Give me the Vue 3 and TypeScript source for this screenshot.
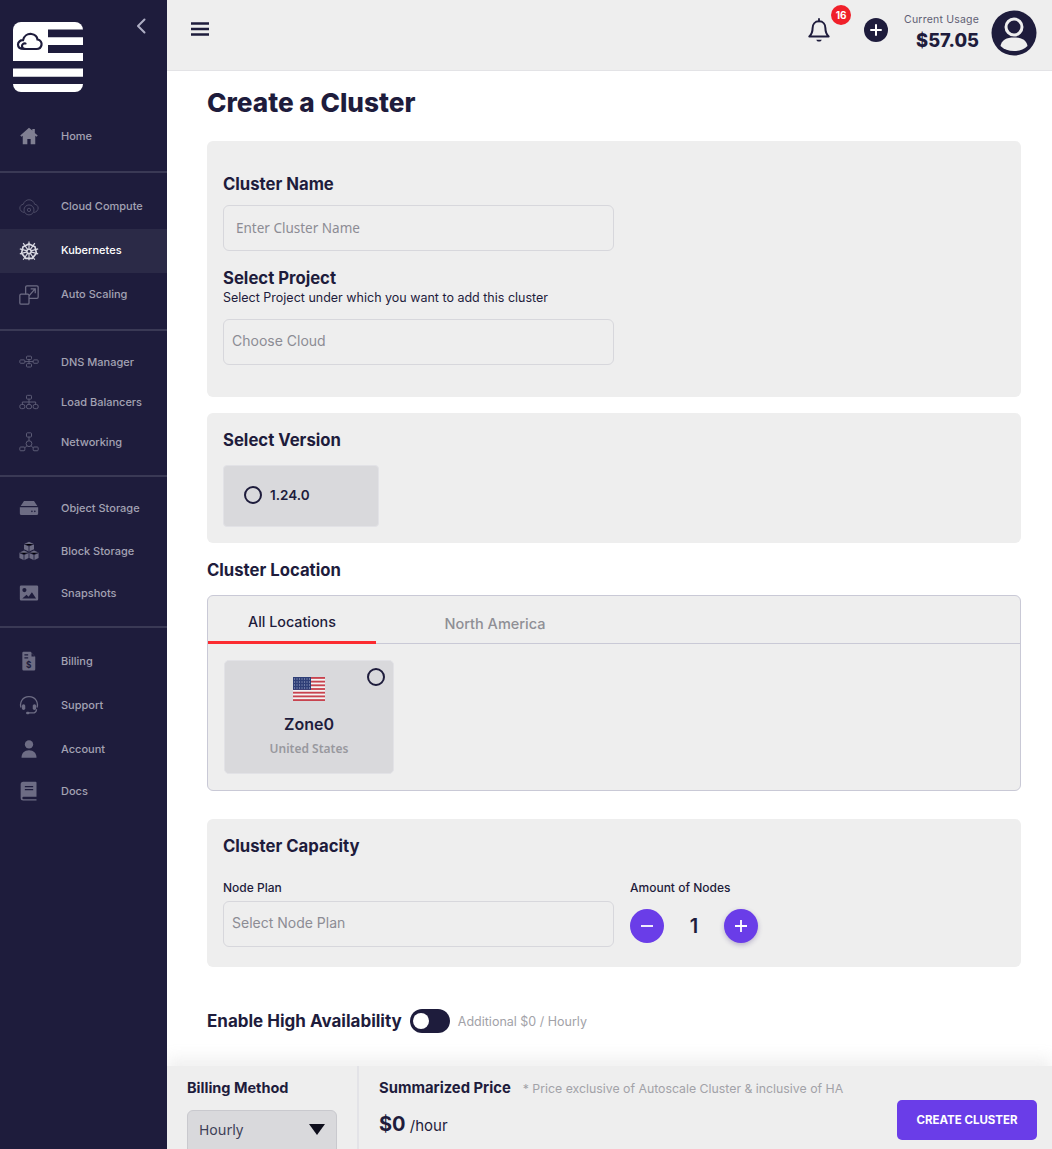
<script setup lang="ts">
interface NavItem { label: string; icon: string; active?: boolean; short?: boolean }
interface NavGroup { size: string; items: NavItem[] }

const solid = 'fill="#6d6c84"'
const line = 'fill="none" stroke="#5d5c76" stroke-width="1.2"'

const icons: Record<string, string> = {
  home: `<path fill="#807f92" d="M12 2 1.5 11.5 3 13l1.5-1.2V22h5.5v-6.5h4V22h5.5v-10.200L21 13l1.500-1.500-3.500-3.200V3.500h-3v2z"/>`,
  cloud: `<path fill="none" stroke="#4c4b66" stroke-width="1.200" d="M6 18.500C3 18 1 15.800 1 13.200c0-2.300 1.800-4.200 4.200-4.500C6 5.600 8.800 3.300 12 3.300c3.300 0 6 2.400 6.800 5.400 2.400.3 4.200 2.200 4.200 4.500 0 2.600-1.900 4.800-5 5.300"/><circle fill="none" stroke="#4c4b66" stroke-width="1.200" cx="12" cy="15.500" r="6"/><circle fill="none" stroke="#4c4b66" stroke-width="1.200" cx="12" cy="15.500" r="2"/>`,
  kube: `<g fill="none" stroke="#d9d9e2" stroke-width="2"><path d="m12 3.500 7.200 3.400 1.700 7.700-5 6.200H8.100l-5-6.200 1.700-7.700z"/><circle cx="12" cy="12.500" r="2.400"/></g><g stroke="#d9d9e2" stroke-width="1.400"><path d="M12 .5v22.500M1 9.500l22 6M23 9.500 1 15.500M5 2.500l14 20M19 2.500 5 22.500"/></g><circle cx="12" cy="12.500" r="1.600" fill="#2b2a47"/>`,
  scale: `<g fill="none" stroke="#6d6c84" stroke-width="1.500"><rect x="8" y="1" width="15" height="15" rx="1.500"/><path d="M12 13l7-8M14 4.500h5.500V10"/><rect x="1" y="11" width="11" height="12" rx="1.500" fill="#1e1c3c"/></g>`,
  dns: `<g ${line}><rect x="9" y="5" width="6" height="4" rx="1"/><rect x="9" y="14" width="6" height="4" rx="1"/><rect x="1" y="9.500" width="6" height="4" rx="1"/><rect x="17" y="9.500" width="6" height="4" rx="1"/><path d="M12 9v5M7 11.500h10"/></g>`,
  lb: `<g ${line}><rect x="9" y="4" width="6" height="4.500" rx="1"/><rect x="1" y="15" width="6" height="5" rx="2"/><rect x="9" y="15" width="6" height="5" rx="2"/><rect x="17" y="15" width="6" height="5" rx="2"/><path d="M12 8.500V15M4 15v-3h16v3"/></g>`,
  net: `<g ${line}><rect x="9" y="1" width="6" height="5" rx="1"/><rect x="1" y="18" width="6" height="4.500" rx="1"/><rect x="17" y="18" width="6" height="4.500" rx="1"/><circle cx="12" cy="14" r="3.500"/><path d="M12 6v4.500M9.500 16.500 7 19M14.500 16.500 17 19"/></g>`,
  object: `<path ${solid} d="M6 3.500h12l4 6H2z"/><path ${solid} fill-rule="evenodd" d="M1 11h22v7.500a2 2 0 0 1-2 2H3a2 2 0 0 1-2-2zm14.500 4a1 1 0 1 0 0 2 1 1 0 0 0 0-2zm3.500 0a1 1 0 1 0 0 2 1 1 0 0 0 0-2z"/>`,
  block: `<path ${solid} d="M12 1l6 2.500V10l-6 2.500L6 10V3.500z"/><path ${solid} d="M6 11.500l5.500 2.300v6.700L6 23 .500 20.500v-6.700z"/><path ${solid} d="M18 11.500l5.500 2.300v6.700L18 23l-5.500-2.500v-6.700z"/><path stroke="#1e1c3c" stroke-width="1" d="M6 3.500l6 2.500 6-2.500M12 6v6M.5 14l5.500 2.300 5.500-2.300M6 16.300V23M12.500 14l5.500 2.300 5.500-2.300M18 16.300V23"/>`,
  snap: `<path ${solid} fill-rule="evenodd" d="M2.500 3h19A1.500 1.500 0 0 1 23 4.500v15a1.500 1.500 0 0 1-1.500 1.500h-19A1.500 1.500 0 0 1 1 19.500v-15A1.500 1.500 0 0 1 2.500 3zM6.500 6a2.500 2.500 0 1 0 0 5 2.500 2.500 0 0 0 0-5zM4 18.500h16.500l-5-7.500-4 5.500-2.500-2.500z"/>`,
  bill: `<path ${solid} fill-rule="evenodd" d="M5.500 1H14l5.500 6v15a1.500 1.500 0 0 1-1.500 1.500H5.500A1.500 1.500 0 0 1 4 22V2.500A1.500 1.500 0 0 1 5.500 1zM15 2.500V6.500h4zM6.500 4v1.500H11V4zM6.500 7.500V9H11V7.500z"/><text x="11.800" y="20" font-size="10" font-weight="700" font-family="Inter, sans-serif" text-anchor="middle" fill="#1e1c3c">$</text>`,
  support: `<path fill="none" stroke="#6d6c84" stroke-width="1.600" d="M2.500 15c-2-5 1-13 9.500-13s11.500 8 9.500 13M21 17c0 2.500-2 4.500-5 4.500h-4"/><rect ${solid} x="3.500" y="11" width="4" height="7" rx="2"/><rect ${solid} x="16.500" y="11" width="4" height="7" rx="2"/><rect ${solid} x="8.500" y="20" width="4" height="3" rx="1.500"/>`,
  account: `<circle ${solid} cx="12" cy="6.500" r="5"/><path ${solid} d="M3 22.500c0-5.500 3.500-9 9-9s9 3.500 9 9z"/>`,
  docs: `<path ${solid} fill-rule="evenodd" d="M5 1h15a1 1 0 0 1 1 1v17H5.500a1.500 1.500 0 0 0 0 3H21v1.500H5A3 3 0 0 1 2 20.500V4a3 3 0 0 1 3-3zM7 6v1.500h10V6zM7 9.500V11h10V9.500z"/>`,
}

const groups: NavGroup[] = [
  { size: 'home', items: [{ label: 'Home', icon: 'home' }] },
  {
    size: 'wide',
    items: [
      { label: 'Cloud Compute', icon: 'cloud' },
      { label: 'Kubernetes', icon: 'kube', active: true },
      { label: 'Auto Scaling', icon: 'scale' },
    ],
  },
  {
    size: 'tight',
    items: [
      { label: 'DNS Manager', icon: 'dns' },
      { label: 'Load Balancers', icon: 'lb' },
      { label: 'Networking', icon: 'net' },
    ],
  },
  {
    size: 'mid',
    items: [
      { label: 'Object Storage', icon: 'object' },
      { label: 'Block Storage', icon: 'block' },
      { label: 'Snapshots', icon: 'snap' },
    ],
  },
  {
    size: 'last',
    items: [
      { label: 'Billing', icon: 'bill' },
      { label: 'Support', icon: 'support' },
      { label: 'Account', icon: 'account' },
      { label: 'Docs', icon: 'docs', short: true },
    ],
  },
]

const stripes: number[] = [0, 2, 4, 6, 8, 10, 12]
</script>

<template>
  <div class="page">
    <aside class="sidebar">
      <div class="brand">
        <svg class="logo" width="70" height="70" viewBox="0 0 70 70">
          <rect width="70" height="70" rx="8" fill="#fff" />
          <path d="M35 7.500h35v7.800H35zM35 23h35v8H35zM0 39h70v7.500H0zM0 54.700h70V62H0z" fill="#1e1c3c" />
          <path d="M11 27c-4 0-6-2-6-4.500S7.500 18 10 18.200C11 14 14.500 11.500 18.500 12c3.500.4 5.500 2.500 6 5.500 3 .5 4.500 3 4 5.500-.5 2.500-2.500 4-5 4H13c-2.500 0-4-1.500-4-3s1.500-3 3.500-2.500" fill="none" stroke="#1e1c3c" stroke-width="2.200" stroke-linecap="round" />
        </svg>
        <svg class="chev" width="10" height="16" viewBox="0 0 10 16">
          <path d="M8.500 1.500 2 8l6.500 6.500" fill="none" stroke="#aeaec4" stroke-width="2" stroke-linecap="round" stroke-linejoin="round" />
        </svg>
      </div>
      <nav class="nav">
        <div v-for="g in groups" :key="g.size" class="group" :class="g.size">
          <div v-for="it in g.items" :key="it.label" class="item" :class="{ active: it.active, short: it.short }">
            <svg class="nav-icon" width="20" height="20" viewBox="0 0 24 24" v-html="icons[it.icon]"></svg>
            <span>{{ it.label }}</span>
          </div>
        </div>
      </nav>
    </aside>

    <div class="column">
      <header class="topbar">
        <svg class="burger" width="18" height="14" viewBox="0 0 18 14">
          <path d="M0 1.500h18M0 7h18M0 12.500h18" stroke="#1e1c3c" stroke-width="2.300" />
        </svg>
        <div class="top-right">
          <div class="bell-wrap">
            <svg width="22" height="24" viewBox="0 0 24 26">
              <path d="M12 3.500c-4.500 0-7 3.500-7 7.500 0 5-1.500 7-3.500 9h21c-2-2-3.500-4-3.500-9 0-4-2.500-7.500-7-7.500z" fill="none" stroke="#1e1c3c" stroke-width="2.200" stroke-linejoin="round" />
              <path d="M12 1v2.500" stroke="#1e1c3c" stroke-width="2" stroke-linecap="round" />
              <path d="M9 23.500h6c-.5 1.500-1.500 2-3 2s-2.500-.5-3-2z" fill="#1e1c3c" />
            </svg>
            <span class="badge">16</span>
          </div>
          <span class="add">
            <svg width="12" height="12" viewBox="0 0 12 12"><path d="M6 1v10M1 6h10" stroke="#fff" stroke-width="2" stroke-linecap="round" /></svg>
          </span>
          <div class="usage">
            <span class="usage-label">Current Usage</span>
            <strong class="usage-value">$57.05</strong>
          </div>
          <svg class="avatar" width="46" height="46" viewBox="0 0 46 46">
            <circle cx="23" cy="23" r="22.500" fill="#1e1c3c" />
            <circle cx="23" cy="17" r="8" fill="none" stroke="#eee" stroke-width="3" />
            <path d="M9.500 36c1-6 6-8.500 13.500-8.500S35.500 30 36.500 36c-3.500 3.500-8 5-13.500 5s-10-1.500-13.500-5z" fill="#eee" />
          </svg>
        </div>
      </header>

      <main class="content">
        <h1 class="title">Create a Cluster</h1>

        <section class="panel first">
          <h2 class="label">Cluster Name</h2>
          <div class="field ph-hum">Enter Cluster Name</div>
          <h2 class="label project">Select Project</h2>
          <p class="hint">Select Project under which you want to add this cluster</p>
          <div class="field">Choose Cloud</div>
        </section>

        <section class="panel second">
          <h2 class="label">Select Version</h2>
          <div class="version"><span class="radio"></span><span>1.24.0</span></div>
        </section>

        <h2 class="label location-title">Cluster Location</h2>
        <section class="location">
          <div class="tabs">
            <div class="tab on">All Locations</div>
            <div class="tab off">North America</div>
          </div>
          <div class="zones">
            <div class="zone">
              <span class="radio zone-radio"></span>
              <svg class="flag" width="32" height="24" viewBox="0 0 32 24">
                <rect width="32" height="24" fill="#f4f4f4" />
                <rect v-for="s in stripes" :key="s" x="0" :y="(s * 24) / 13" width="32" height="1.850" fill="#c8434f" />
                <rect width="18" height="12.900" fill="#2f3f77" />
                <path d="M1 2h16M1 5h16M1 8h16M1 11h16" stroke="#aab2cf" stroke-width="1" stroke-dasharray="1 1.500" />
              </svg>
              <div class="zone-name">Zone0</div>
              <div class="zone-sub">United States</div>
            </div>
          </div>
        </section>

        <section class="panel third">
          <h2 class="label">Cluster Capacity</h2>
          <div class="capacity">
            <div class="cap-plan">
              <div class="small-label">Node Plan</div>
              <div class="field">Select Node Plan</div>
            </div>
            <div>
              <div class="small-label">Amount of Nodes</div>
              <div class="stepper">
                <span class="step"><svg width="12" height="12" viewBox="0 0 12 12"><path d="M0 6h12" stroke="#fff" stroke-width="1.800" /></svg></span>
                <span class="count">1</span>
                <span class="step raised"><svg width="14" height="14" viewBox="0 0 14 14"><path d="M7 1v12M1 7h12" stroke="#fff" stroke-width="1.800" /></svg></span>
              </div>
            </div>
          </div>
        </section>

        <div class="ha">
          <span class="ha-label">Enable High Availability</span>
          <span class="toggle"><span class="knob"></span></span>
          <span class="ha-note">Additional $0 / Hourly</span>
        </div>
      </main>

      <footer class="footer">
        <div class="billing">
          <div class="foot-title">Billing Method</div>
          <div class="select">
            <span>Hourly</span>
            <svg width="16" height="11" viewBox="0 0 16 11"><path d="M0 0h16L8 11z" fill="#0e0e1c" /></svg>
          </div>
        </div>
        <div class="summary">
          <div class="sum-head">
            <span class="foot-title sum-title">Summarized Price</span>
            <span class="sum-note">* Price exclusive of Autoscale Cluster &amp; inclusive of HA</span>
          </div>
          <div class="sum-row">
            <div class="price"><strong>$0</strong> <span>/hour</span></div>
            <button class="create" type="button">CREATE CLUSTER</button>
          </div>
        </div>
      </footer>
    </div>
  </div>
</template>

<style>
html, body { margin: 0; padding: 0; background: #fff; }
</style>

<style scoped>
* { box-sizing: border-box; }
.page {
  display: flex;
  width: 1052px;
  height: 1149px;
  overflow: hidden;
  font-family: Inter, "Noto Sans", sans-serif;
  color: #1e1c3c;
}
.sidebar { position: relative; z-index: 1; width: 167px; flex: none; background: #1e1c3c; }
.brand { display: flex; justify-content: space-between; align-items: flex-start; height: 114px; padding: 22px 21px 0 13px; }
.chev { margin-top: -4px; }
.group { border-bottom: 2px solid #3a3955; }
.group.last { border-bottom: 0; }
.group.home { height: 59px; display: flex; align-items: flex-start; }
.group.home .item { width: 100%; }
.group.wide { height: 158px; padding-top: 12px; }
.group.wide span { margin-top: -2px; }
.group.tight { height: 146px; padding-top: 11px; }
.group.mid { height: 151px; padding-top: 10px; }
.group.last { padding-top: 11px; }
.item {
  display: flex;
  align-items: center;
  height: 44px;
  padding-left: 19px;
  font-size: 11px;
  font-weight: 500;
  color: #a3a2b3;
}
.item.short { height: 40px; }
.group.tight .item { height: 40px; }
.group.mid .item { height: 42.500px; }
.item.active { background: #2b2a47; color: #fff; }
.nav-icon { margin-right: 22px; flex: none; }
.column { flex: 1; min-width: 0; display: flex; flex-direction: column; }
.topbar {
  height: 71px;
  flex: none;
  display: flex;
  align-items: flex-start;
  justify-content: space-between;
  background: #eee;
  border-bottom: 1px solid #e3e3e6;
  padding: 22px 15px 0 24px;
}
.top-right { display: flex; align-items: center; margin-top: -12px; }
.bell-wrap { position: relative; display: flex; width: 22px; margin-top: -6px; }
.badge {
  position: absolute;
  top: -13px;
  left: 23px;
  width: 20px;
  height: 20px;
  border-radius: 50%;
  background: #f0202a;
  color: #fff;
  font-size: 10px;
  font-weight: 700;
  display: flex;
  align-items: center;
  justify-content: center;
}
.add {
  width: 24px;
  height: 24px;
  margin: -6px 0 0 34px;
  border-radius: 50%;
  background: #1e1c3c;
  display: flex;
  align-items: center;
  justify-content: center;
}
.usage { display: flex; flex-direction: column; align-items: flex-end; margin: -2px 12px 0 16px; }
.usage-label { font-size: 10.500px; color: #5f5e74; line-height: 16px; letter-spacing: .2px; }
.usage-value { font-size: 18.300px; font-weight: 800; line-height: 25px; }
.content { flex: 1; min-height: 0; padding: 0 31px 0 40px; }
.title { margin: 16px 0 23px; font-size: 26.200px; line-height: 31px; font-weight: 800; }
.panel { background: #eee; border-radius: 6px; padding: 0 16px; }
.first { height: 256px; padding-top: 33px; }
.second { height: 130px; margin-top: 16px; padding-top: 17px; }
.third { height: 148px; margin-top: 28px; padding-top: 17px; }
.label { margin: 0; font-size: 16.700px; line-height: 20px; font-weight: 700; }
.project { margin-top: 17px; }
.hint { margin: 2px 0 13px; font-size: 12.500px; line-height: 16px; }
.field {
  width: 391px;
  height: 46px;
  border: 1px solid #d7d7dc;
  border-radius: 6px;
  font-size: 14px;
  color: #8c8c94;
  display: flex;
  align-items: center;
  padding: 0 0 3px 8px;
}
.ph-hum { margin-top: 11px; padding: 0 0 1px 12px; font-size: 13.500px; font-family: "Noto Sans", sans-serif; }
.version {
  display: flex;
  align-items: center;
  gap: 8px;
  width: 156px;
  height: 62px;
  margin-top: 15px;
  padding: 0 0 2px 20px;
  background: #d9d9dc;
  border: 1px solid #e2e2e6;
  border-radius: 4px;
  font-size: 13.500px;
  font-weight: 600;
}
.radio { width: 18px; height: 18px; border: 2px solid #1e1c3c; border-radius: 50%; flex: none; display: block; }
.location-title { margin-top: 17px; }
.location { height: 196px; margin-top: 15px; background: #eee; border: 1px solid #c9c9d6; border-radius: 6px; }
.tabs { display: flex; height: 48px; border-bottom: 1px solid #c9c9d6; }
.tab { font-size: 14.300px; font-weight: 500; display: flex; justify-content: center; }
.tab.on { width: 168px; height: 48px; padding-top: 17px; border-bottom: 3px solid #fb2b30; color: #1e1c3c; }
.tab.off { width: 238px; padding-top: 19px; font-size: 14.500px; color: #8f8f95; }
.zones { padding: 16px; }
.zone {
  position: relative;
  width: 170px;
  height: 114px;
  background: #d9d9dc;
  border: 1px solid #e2e2e6;
  border-radius: 5px;
  display: flex;
  flex-direction: column;
  align-items: center;
  padding-top: 16px;
}
.zone-radio { position: absolute; top: 7px; right: 8px; }
.zone-name { margin-top: 11px; font-size: 16px; line-height: 24px; font-weight: 600; }
.zone-sub { margin-top: 4px; font-size: 12px; line-height: 18px; font-weight: 600; color: #98989e; font-family: "Noto Sans", sans-serif; }
.capacity { display: flex; margin-top: 23px; }
.cap-plan { width: 407px; }
.small-label { font-size: 12px; line-height: 18px; font-weight: 500; margin-bottom: 4px; }
.stepper { display: flex; align-items: center; margin-top: 12px; }
.step { width: 34px; height: 34px; border-radius: 50%; background: #6a3de8; display: flex; align-items: center; justify-content: center; }
.raised { box-shadow: 0 2px 5px rgba(60, 40, 120, .3); }
.count { width: 60px; text-align: center; font-size: 20px; font-weight: 600; }
.ha { display: flex; align-items: center; margin-top: 40px; height: 28px; }
.ha-label { font-size: 17px; font-weight: 700; }
.toggle { width: 40px; height: 24px; margin-left: 8px; border-radius: 12px; background: #1e1c3c; display: flex; align-items: center; padding-left: 3px; }
.knob { width: 16px; height: 16px; border-radius: 50%; background: #fff; }
.ha-note { margin-left: 8px; font-size: 12.500px; color: #a2a2a8; }
.footer {
  height: 83px;
  flex: none;
  display: flex;
  background: #eee;
  box-shadow: 0 -8px 14px rgba(238, 238, 238, .9);
}
.billing { width: 192px; flex: none; padding: 13px 20px 0; border-right: 2px solid #e3e3e7; }
.foot-title { font-size: 14.500px; line-height: 18px; font-weight: 700; }
.sum-title { font-size: 14.800px; }
.select {
  display: flex;
  align-items: center;
  justify-content: space-between;
  width: 150px;
  height: 46px;
  margin-top: 13px;
  padding: 0 11px 8px;
  background: #d9d9dc;
  border: 1px solid #c9c9ce;
  border-radius: 6px;
  font-size: 14px;
  color: #3d4057;
  font-family: "Noto Sans", sans-serif;
}
.summary { flex: 1; padding: 13px 15px 0 20px; }
.sum-head { display: flex; align-items: center; }
.sum-note { margin-left: 12px; font-size: 12.300px; color: #a2a2a8; }
.sum-row { display: flex; justify-content: space-between; align-items: flex-start; }
.price { margin-top: 15px; font-size: 15px; line-height: 24px; }
.price strong { font-size: 20px; font-weight: 700; }
.create {
  width: 140px;
  height: 40px;
  margin-top: 3px;
  padding-bottom: 2px;
  border: 0;
  border-radius: 5px;
  background: #6a3de8;
  color: #fff;
  font: 700 11.500px Inter, sans-serif;
}
</style>
